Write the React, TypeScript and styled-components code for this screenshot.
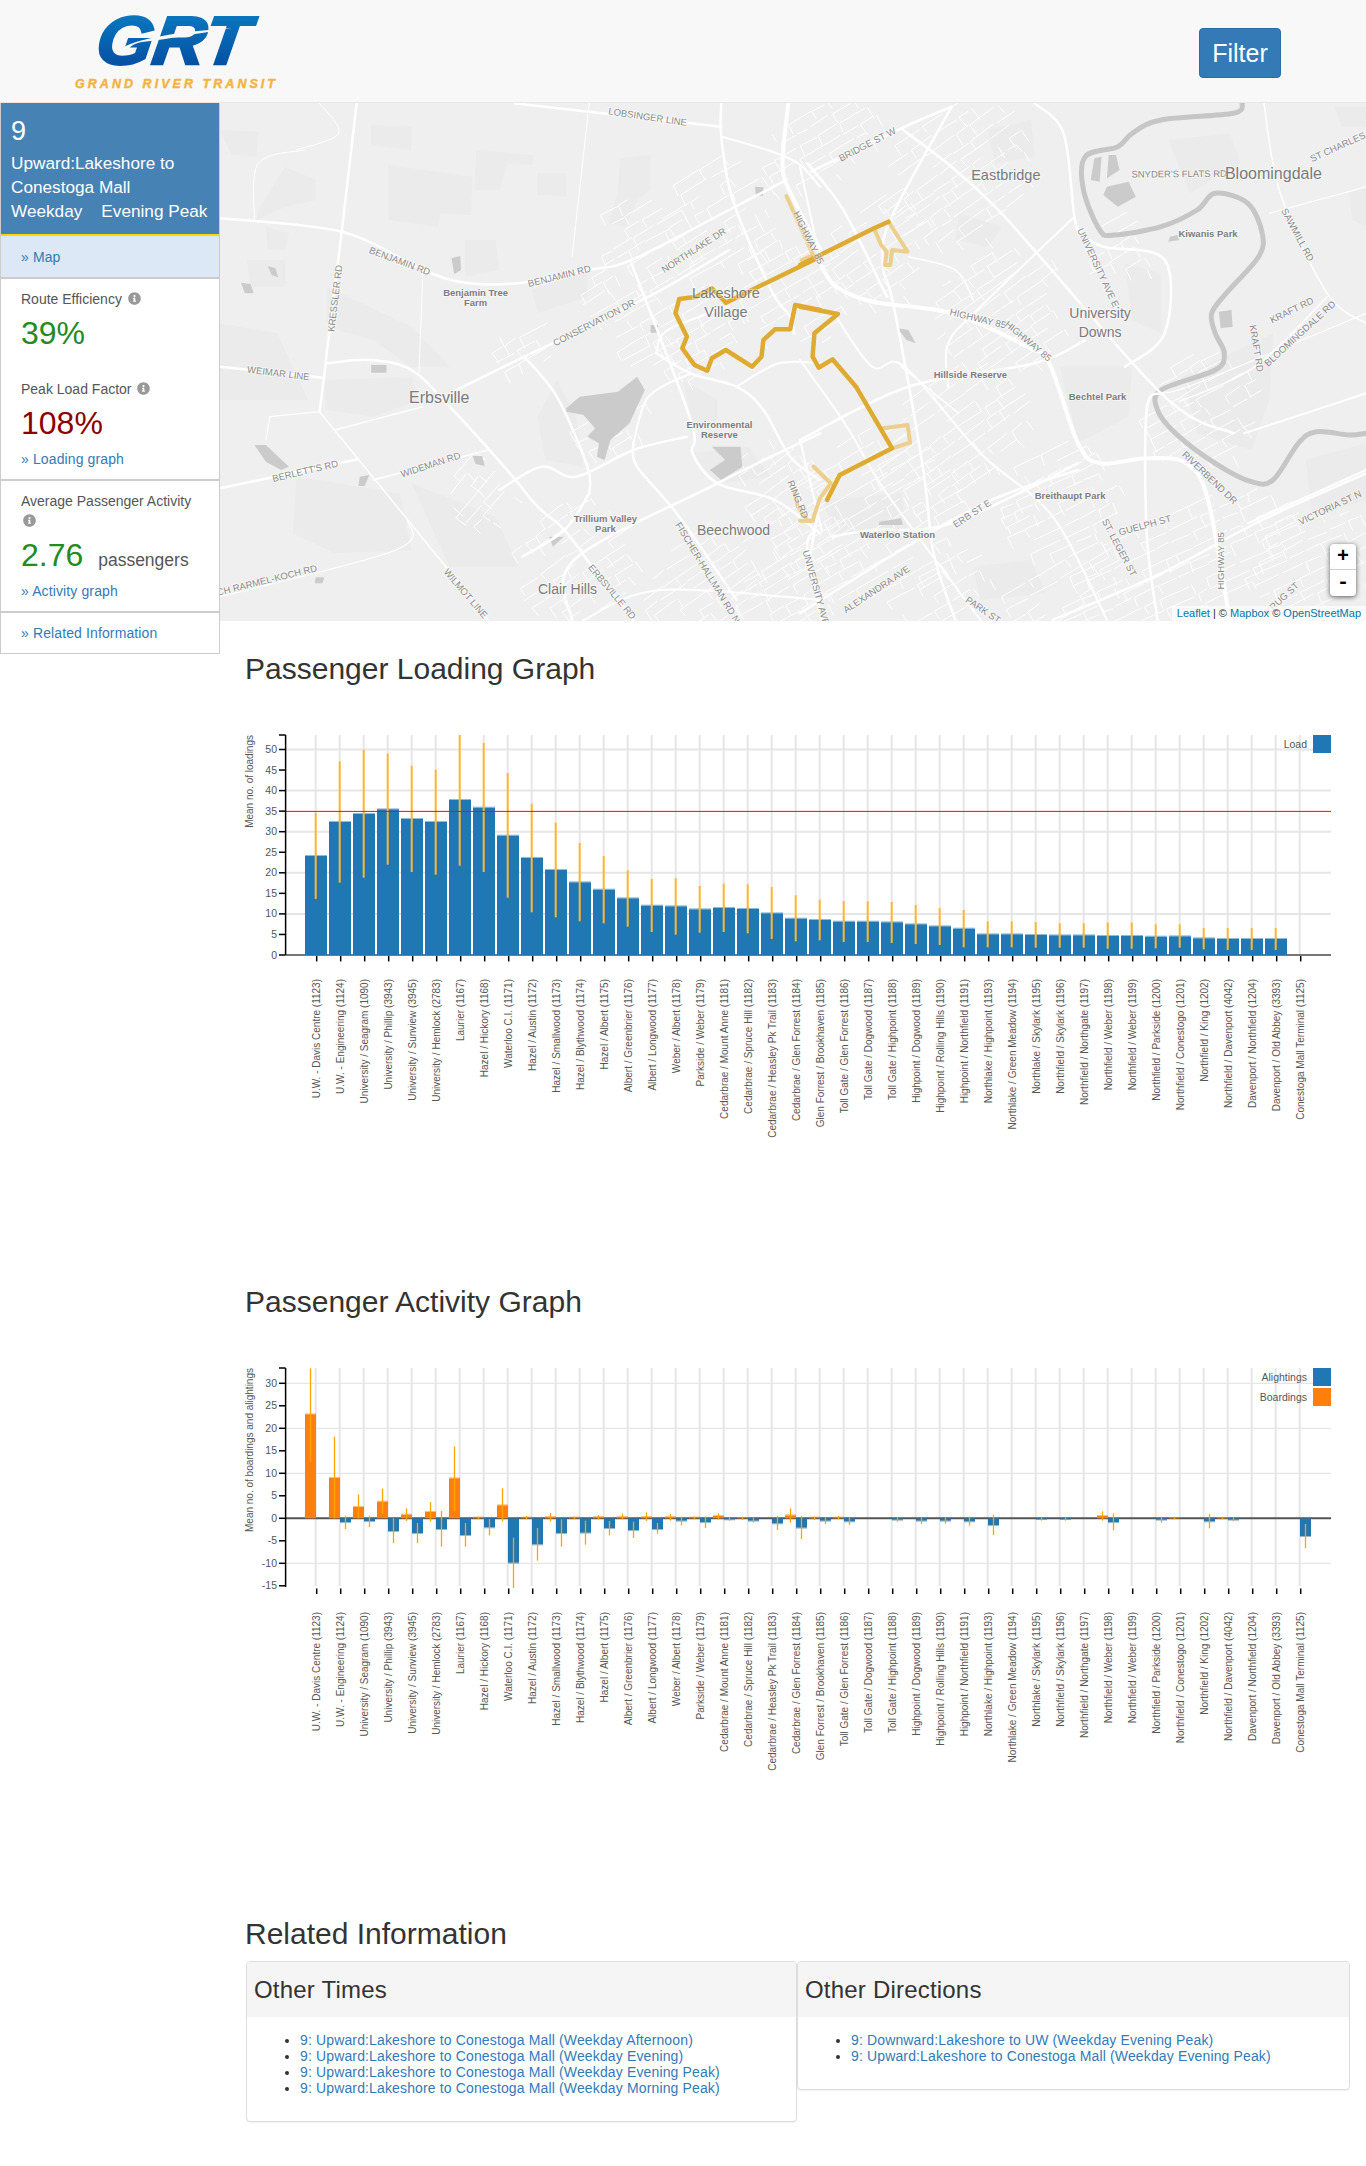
import React from "react";
import styled, { createGlobalStyle } from "styled-components";
import { FaInfoCircle } from "react-icons/fa";

const Global = createGlobalStyle`
  html, body { margin: 0; padding: 0; background: #fff; }
  body { font-family: "Liberation Sans", Arial, sans-serif; font-size: 14px; color: #333; }
  * { box-sizing: border-box; }
`;

/* ---------- layout ---------- */
const Navbar = styled.header`
  height: 103px; background: #f8f8f8; border-bottom: 1px solid #e7e7e7;
  display: flex; justify-content: space-between; align-items: flex-start; padding: 0 85px 0 75px;
`;
const LogoSvg = styled.svg`display: block;`;
const FilterButton = styled.button`
  margin-top: 28px; width: 82px; height: 50px; background: #337ab7; border: 1px solid #2e6da4; border-radius: 4px;
  color: #fff; font: 25px "Liberation Sans", Arial, sans-serif; padding: 0;
`;
const Layout = styled.div`display: flex; align-items: flex-start;`;
const Sidebar = styled.aside`
  width: 220px; flex: none; border: 1px solid #ccc; border-top: none; background: #fff;
`;
const RouteHeader = styled.div`
  background: #4682b4; color: #fff; border-bottom: 2px solid #ffd700; padding: 13px 10px 11px; font-size: 17.2px; line-height: 24px; height: 133px;
`;
const RouteNumber = styled.div`font-size: 27px; line-height: 30px; margin-bottom: 5px;`;
const PeakLine = styled.div`display: flex; gap: 19px;`;
const NavRow = styled.div`
  height: 43px; background: #dce8f5; border-bottom: 2px solid #ccc; padding: 0 20px; display: flex; align-items: center;
`;
const Block = styled.section`
  padding: 10px 20px; border-bottom: ${(p: { $last?: boolean }) => (p.$last ? "none" : "2px solid #ccc")};
`;
const MetricLabel = styled.div`
  color: #555; font-size: 14px; line-height: 20px;
  svg { vertical-align: -1px; margin-left: 2px; }
`;
const MetricValue = styled.div<{ $color: string; $after?: number }>`
  color: ${(p) => p.$color}; font-size: 32px; line-height: 36px; margin: 6px 0 ${(p) => p.$after ?? 0}px;
`;
const Unit = styled.span`color: #555; font-size: 17.5px; margin-left: 6px;`;
const SideLink = styled.a<{ $top?: number }>`
  display: block; color: #337ab7; font-size: 14px; line-height: 20px; letter-spacing: .12px; text-decoration: none; margin-top: ${(p) => p.$top ?? 0}px;
`;
const Main = styled.main`flex: 1; min-width: 0;`;
const MapWrap = styled.div`position: relative; height: 518px; overflow: hidden; background: #efefef;`;
const MapSvg = styled.svg`display: block;`;
const ZoomControl = styled.div`
  position: absolute; right: 10px; top: 441px; width: 26px; height: 52px; background: #fff; border-radius: 4px;
  box-shadow: 0 1px 5px rgba(0,0,0,.65);
`;
const ZoomBtn = styled.div<{ $top?: boolean }>`
  height: 26px; text-align: center; color: #000; font: bold 20px/25px "Liberation Mono", monospace;
  border-bottom: ${(p) => (p.$top ? "1px solid #ccc" : "none")};
`;
const Attribution = styled.div`
  position: absolute; right: 0; bottom: 0; padding: 0 5px; background: rgba(255,255,255,.7); font-size: 11px; line-height: 15px; color: #333;
`;
const AttrLink = styled.a`color: #0078a8; text-decoration: none;`;
const Section = styled.section<{ $after: number }>`padding-left: 25px; padding-bottom: ${(p) => p.$after}px;`;
const Title = styled.h2<{ $above: number; $below: number }>`
  font-size: 30px; font-weight: 400; line-height: 33px; margin: ${(p) => p.$above}px 0 ${(p) => p.$below}px; color: #333;
`;
const ChartSvg = styled.svg`display: block; margin-left: -25px;`;
const Panels = styled.div`display: grid; grid-template-columns: 551px 553px; align-items: start; margin-left: 1px;`;
const Panel = styled.div`border: 1px solid #ddd; border-radius: 4px; box-shadow: 0 1px 1px rgba(0,0,0,.05); background: #fff;`;
const PanelHead = styled.div`background: #f5f5f5; height: 55px; padding: 0 7px; display: flex; align-items: center; border-radius: 3px 3px 0 0;`;
const PanelTitle = styled.h3`font-size: 24px; font-weight: 400; margin: 0; color: #333; letter-spacing: .2px;`;
const PanelBody = styled.div`padding: 15px 13px;`;
const List = styled.ul`margin: 0 0 10px; padding-left: 40px; line-height: 16px;`;
const ListLink = styled.a`color: #337ab7; text-decoration: none; font-size: 14px; letter-spacing: .14px;`;

/* ---------- svg parts ---------- */
const Road = styled.path<{ $w: number; $c?: string }>`
  fill: none; stroke: ${(p) => p.$c ?? "#fff"}; stroke-width: ${(p) => p.$w}px; stroke-linejoin: round; stroke-linecap: round;
`;
const Land = styled.polygon<{ $c?: string }>`fill: ${(p) => p.$c ?? "#ebebeb"};`;
const Streets = styled.path`fill: none; stroke: #fff; stroke-width: 1px;`;
const MapLabel = styled.text<{ $size: number; $bold?: boolean; $c?: string }>`
  font-family: "Liberation Sans", Arial, sans-serif; font-size: ${(p) => p.$size}px; font-weight: ${(p) => (p.$bold ? 700 : 400)};
  fill: ${(p) => p.$c ?? "#8a8a8a"}; stroke: rgba(255,255,255,.45); stroke-width: 2px; paint-order: stroke; text-anchor: middle;
`;
const GridLine = styled.line<{ $w?: number }>`stroke: #e6e6e6; stroke-width: ${(p) => p.$w ?? 2}px;`;
const AxisLine = styled.line`stroke: #000; stroke-width: 1.5px;`;
const ZeroLine = styled.line<{ $c: string }>`stroke: ${(p) => p.$c}; stroke-width: 2px;`;
const LimitLine = styled.line`stroke: #e81010; stroke-width: 1px;`;
const Bar = styled.rect<{ $c: string }>`fill: ${(p) => p.$c};`;
const BarEdge = styled.rect<{ $c: string }>`fill: ${(p) => p.$c}; opacity: .5;`;
const ErrorBar = styled.line<{ $w: number; $c: string }>`stroke: ${(p) => p.$c}; stroke-width: ${(p) => p.$w}px;`;
const TickText = styled.text`font: 10.5px "Liberation Sans", Arial, sans-serif; fill: #555; text-anchor: end;`;
const AxisTitle = styled.text`font: 10px "Liberation Sans", Arial, sans-serif; fill: #555; text-anchor: end;`;
const StopText = styled.text`font: 10px "Liberation Sans", Arial, sans-serif; fill: #555; text-anchor: end;`;

/* ---------- map data (crop coordinates converted to page coordinates) ---------- */
type Side = "L" | "R";
const px = (s: Side, x: number) => (s === "L" ? 220 + x * 0.3827 : 800 + x * 0.3611);
const py = (y: number) => 100 + y / 3;
const parse = (s: Side, d: string) =>
  d.trim().split(/\s+/).map((p) => { const [x, y] = p.split(",").map(Number); return [px(s, x), py(y)] as [number, number]; });
const pts = (s: Side, d: string) => parse(s, d).map(([x, y]) => `${x.toFixed(1)},${y.toFixed(1)}`).join(" ");
const straight = (s: Side, d: string) => "M" + parse(s, d).map(([x, y]) => `${x.toFixed(1)} ${y.toFixed(1)}`).join("L");
const curved = (s: Side, d: string) => {
  const p = parse(s, d);
  let out = `M${p[0][0].toFixed(1)} ${p[0][1].toFixed(1)}`;
  for (let i = 0; i < p.length - 1; i++) {
    const a = p[Math.max(i - 1, 0)], b = p[i], c = p[i + 1], e = p[Math.min(i + 2, p.length - 1)];
    const c1 = [b[0] + (c[0] - a[0]) / 6, b[1] + (c[1] - a[1]) / 6];
    const c2 = [c[0] - (e[0] - b[0]) / 6, c[1] - (e[1] - b[1]) / 6];
    out += `C${c1[0].toFixed(1)} ${c1[1].toFixed(1)} ${c2[0].toFixed(1)} ${c2[1].toFixed(1)} ${c[0].toFixed(1)} ${c[1].toFixed(1)}`;
  }
  return out;
};

const landL = [
  "440,195 660,230 655,345 575,340 570,380 440,360", "670,150 820,165 815,195 750,190 730,270 665,270",
  "395,75 500,80 500,150 395,135", "1045,175 1125,165 1125,270 1090,300 1060,380 1015,370 1040,280",
  "830,220 905,220 905,290 830,285", "100,330 170,200 250,240 250,300 170,320 95,360", "640,420 720,420 730,510 640,530",
  "815,570 960,510 960,590 830,640", "280,560 500,680 600,800 500,800 400,720 280,680", "270,840 500,830 520,900 400,950 280,930",
  "200,1130 470,1180 500,1350 300,1360 190,1300", "500,1150 720,1250 780,1400 600,1400", "880,840 930,950 950,1100 850,1080 830,950",
  "0,90 100,95 95,170 30,165", "0,670 150,700 230,900 100,900 0,900", "1210,840 1300,900 1300,960 1235,980", "1230,1060 1380,1040 1440,1130 1300,1150",
  "120,380 180,400 170,450 125,450", "70,480 170,480 170,560 80,560",
];
const landR = [
  "1060,830 1310,700 1300,900 1250,1050 1100,1000", "720,800 920,800 910,950 770,1030", "900,490 1000,520 1000,700 920,660",
  "1020,120 1190,100 1220,190 1080,280", "1400,1080 1568,1030 1568,1200 1420,1250", "520,90 640,60 650,170 540,190",
  "60,1200 280,1180 300,1320 100,1300", "440,340 560,380 520,440 430,420", "480,1400 640,1380 680,1480 500,1500", "1480,20 1568,20 1568,80 1500,80",
  "1520,280 1568,260 1568,380 1530,360",
];
const waterL = [
  "905,925 940,890 1040,875 1090,830 1110,870 1070,970 1020,1020 1005,1080 985,1070 990,1030 960,1010 980,985 950,945 905,935",
  "90,1035 120,1035 180,1100 160,1110 120,1085", "395,795 435,795 435,818 395,818", "1285,1040 1360,1040 1365,1100 1310,1140 1280,1110 1320,1080",
  "55,548 80,552 88,580 65,580", "125,498 145,505 152,532 135,525", "605,475 628,468 630,510 612,522", "660,1068 685,1068 692,1098 668,1092",
  "365,1130 390,1125 378,1158 362,1158", "250,1432 272,1432 268,1450 248,1450", "1398,260 1420,262 1418,288 1400,285", "860,1310 898,1310 870,1340",
  "1125,675 1145,675 1145,698 1125,698",
];
const waterR = [
  "850,260 910,245 930,290 880,320 840,285", "815,175 835,170 830,245 805,240", "855,165 875,165 885,210 850,235", "1160,635 1195,630 1198,680 1165,685",
  "270,685 300,690 320,730 295,720", "1025,410 1045,405 1050,420 1020,425", "220,1265 280,1255 285,1275 218,1275",
];
const roadsL: [string, number][] = [
  ["357,10 318,395 285,700 272,830 260,935", 2.5],
  ["0,355 318,395 530,510 650,550 790,548 960,510 1075,480 1330,330 1480,240", 2.5],
  ["770,10 1000,40 1310,80", 2.5], ["0,800 270,833", 2.5],
  ["280,790 390,780 500,810 600,920 750,1110 830,1220 900,1290 985,1420 1080,1560", 2.5],
  ["600,880 795,770 1120,590 1330,450", 2.5], ["1075,490 1230,960 1235,1060 1300,1150 1450,1200 1568,1300", 2.5],
  ["1310,10 1310,110 1340,300 1440,570 1490,650 1500,700", 2.5], ["795,770 880,890 960,1100 965,1180", 2.5],
  ["0,1165 360,1078", 2.5], ["260,935 590,1400 700,1560", 1.5], ["400,1140 700,1050", 1.5], ["300,990 530,920", 1.5],
  ["1485,10 1470,200 1500,300 1568,450", 4], ["730,1170 840,1100 930,1130 1080,1050 1220,1010", 2.5],
  ["1140,760 1230,820 1350,860 1420,930 1490,1070 1568,1140", 2.5], ["920,1560 925,1380 1300,1150 1568,1000", 2.5],
  ["1080,1030 1090,1100 1200,1250 1350,1500", 2.5], ["1080,1030 1120,890 1230,820", 2], ["1140,760 1170,690 1330,620", 2],
  ["0,1490 460,1350 490,1260", 1.2], ["220,150 100,190 90,360", 1], ["260,10 310,100 200,150", 1], ["965,10 920,470", 1], ["530,520 520,820", 1],
  ["1310,110 1430,150 1510,190 1568,260", 2], ["790,1370 900,1290 965,1180", 2.5], ["950,1560 1150,1470 1568,1500", 2], ["1540,1380 1568,1200", 2.5],
  ["130,950 260,935", 1.2], ["130,950 120,1020", 1.2], ["1350,860 1460,790 1568,790", 2],
];
const roadsR: [string, number][] = [
  ["60,500 100,560 200,605 420,640 630,740 690,790 770,1030 830,1090 960,1075 1070,1090 1130,1200 1190,1560", 4],
  ["30,215 280,85 420,20", 2.5], ["280,85 540,320 1000,880 1200,1000", 2.5],
  ["650,10 730,100 760,350 780,400 840,440 1010,480 1010,700 900,800", 2.5], ["420,20 250,360 230,500 260,620 340,1100 370,1360 430,1560", 2.5],
  ["0,1020 300,860 650,790 790,720", 2.5], ["760,350 500,620 410,730 410,860", 2], ["1000,880 960,930 960,1300 990,1560", 2.5],
  ["1568,880 1230,1000", 2], ["90,1310 200,1290 420,1270 770,1090", 2.5], ["0,1540 280,1350 530,1200 770,1110", 2.5],
  ["700,1560 1000,1420 1280,1260 1568,1120", 2.5], ["1050,905 1260,800 1460,590", 1.5], ["1285,10 1330,280 1460,580 1568,670", 1.5],
  ["40,1290 20,1350 60,1560", 2.5], ["100,650 200,800 290,800 500,1060 700,1250 850,1560", 2], ["20,190 120,330 240,590", 2.5],
  ["0,200 60,500", 2], ["0,1020 60,1290", 2], ["0,780 130,980 240,1180 500,1560", 2], ["280,800 440,940", 1.5], ["300,470 430,510 480,600", 1.5],
  ["1240,1270 1568,1110", 2], ["1000,880 1100,850 1568,640", 1.2], ["1568,260 1300,340", 1.2],
];
const riverR = "1225,10 1200,40 1000,60 920,100 880,140 790,170 785,270 830,390 870,405 1000,380 1100,330 1150,280 1240,310 1280,400 1270,470 1180,580 1140,640 1150,700 1175,760 1150,810 1000,870 990,930 1040,1000 1150,1090 1250,1145 1310,1140 1380,1030 1430,995 1520,1005 1568,1000";
const routeMain: [Side, string][] = [
  ["L", "1322,608 1285,565 1245,590 1200,597 1190,640 1220,710 1208,745 1240,795 1273,812 1285,775 1322,750 1390,800 1415,770 1420,720 1450,688 1490,688 1503,615 1568,630"],
  ["L", "1322,608 1568,470"],
  ["R", "0,495 205,385 245,365"],
  ["R", "0,620 105,642 40,700 35,770 52,803 90,778 155,860 255,1045 110,1125 75,1200"],
];
const routeSoft: [Side, string][] = [
  ["L", "1480,288 1550,465 1520,480"], ["R", "38,1100 85,1150"], ["R", "85,1150 55,1195 35,1262 0,1262"], ["L", "1500,1170 1510,1220 1535,1262 1550,1262"],
  ["R", "230,985 298,975 305,1028 255,1045"], ["R", "205,385 225,435 240,455 235,495 250,495 255,450 298,455 245,365"],
];

type Lab = [Side, string, number, number, number, number];
const roadLabels: Lab[] = [
  ["L", "LOBSINGER LINE", 1000, 30, 1235, 70], ["L", "BENJAMIN RD", 395, 450, 545, 515], ["L", "BENJAMIN RD", 808, 550, 965, 505],
  ["L", "KRESSLER RD", 290, 690, 310, 500], ["L", "NORTHLAKE DR", 1157, 510, 1318, 390], ["L", "CONSERVATION DR", 872, 730, 1082, 605],
  ["L", "WEIMAR LINE", 75, 808, 230, 830], ["L", "BERLETT'S RD", 140, 1135, 305, 1090], ["L", "WIDEMAN RD", 475, 1122, 625, 1065],
  ["L", "FISCHER-HALLMAN RD N", 1200, 1275, 1350, 1560], ["L", "RING RD", 1492, 1145, 1530, 1250], ["L", "ERBSVILLE RD", 970, 1400, 1080, 1550],
  ["L", "WILMOT LINE", 590, 1410, 695, 1550], ["L", "CH RARMEL-KOCH RD", 0, 1475, 245, 1405], ["L", "HIGHWAY 85", 1505, 335, 1572, 490],
  ["R", "BRIDGE ST W", 110, 175, 262, 90], ["R", "SNYDER'S FLATS RD", 925, 222, 1175, 220], ["R", "ST CHARLES", 1418, 175, 1560, 105],
  ["R", "SAWMILL RD", 1342, 330, 1415, 478], ["R", "UNIVERSITY AVE E", 778, 390, 875, 615], ["R", "HIGHWAY 85", 418, 635, 568, 675],
  ["R", "HIGHWAY 85", 580, 675, 685, 770], ["R", "KRAFT RD", 1305, 660, 1418, 600], ["R", "KRAFT RD", 1255, 680, 1275, 810],
  ["R", "BLOOMINGDALE RD", 1298, 785, 1470, 615], ["R", "RIVERBEND DR", 1065, 1060, 1205, 1205], ["R", "ERB ST E", 427, 1275, 525, 1205],
  ["R", "VICTORIA ST N", 1385, 1265, 1550, 1180], ["R", "ST. LEGER ST", 845, 1260, 925, 1425], ["R", "GUELPH ST", 888, 1295, 1022, 1255],
  ["R", "HIGHWAY 85", 1165, 1465, 1165, 1300], ["R", "ALEXANDRA AVE", 125, 1530, 298, 1405], ["R", "UNIVERSITY AVE", 20, 1365, 70, 1560],
  ["R", "PARK ST", 465, 1498, 550, 1560], ["R", "KRUG ST", 1290, 1540, 1378, 1450],
];
const placeLabels: [Side, string, number, number, number, boolean][] = [
  ["L", "Benjamin Tree", 668, 577, 9.5, true], ["L", "Farm", 668, 607, 9.5, true], ["L", "Erbsville", 573, 893, 16, false],
  ["L", "Lakeshore", 1322, 578, 14.5, false], ["L", "Village", 1322, 635, 14.5, false], ["L", "Environmental", 1305, 974, 9.5, true], ["L", "Reserve", 1305, 1004, 9.5, true],
  ["L", "Trillium Valley", 1007, 1257, 9.5, true], ["L", "Park", 1007, 1287, 9.5, true], ["L", "Beechwood", 1342, 1290, 14, false], ["L", "Clair Hills", 908, 1467, 14, false],
  ["R", "Eastbridge", 570, 225, 14.5, false], ["R", "Bloomingdale", 1311, 220, 16, false], ["R", "Kiwanis Park", 1130, 402, 9.5, true],
  ["R", "University", 831, 638, 14, false], ["R", "Downs", 831, 695, 14, false], ["R", "Hillside Reserve", 472, 825, 9.5, true], ["R", "Bechtel Park", 824, 890, 9.5, true],
  ["R", "Breithaupt Park", 748, 1188, 9.5, true], ["R", "Waterloo Station", 270, 1304, 9.5, true],
];

const fabricPatches: [number, number, number, number, number][] = [
  [680, 320, 150, 120, -30], [640, 235, 100, 90, -30], [720, 215, 120, 120, -30], [820, 140, 130, 80, -30], [790, 290, 110, 140, -30], [880, 250, 120, 110, -35],
  [870, 520, 210, 180, -30], [790, 500, 100, 140, -35], [960, 175, 180, 140, -35], [1000, 310, 150, 130, -35], [950, 430, 180, 120, -35], [1060, 500, 130, 120, -25],
  [1180, 560, 270, 110, -25], [1200, 410, 130, 120, -30], [1310, 560, 140, 110, -25], [1120, 250, 80, 80, -30], [575, 560, 140, 120, -35], [705, 575, 140, 100, -35],
  [785, 590, 120, 80, -30], [480, 490, 80, 80, -50], [610, 420, 100, 60, -30], [525, 345, 70, 60, -30], [610, 300, 60, 80, -30], [1060, 590, 160, 70, -30], [950, 590, 120, 70, -30],
];
function buildFabric() {
  let seed = 91;
  const rnd = () => { seed = (seed * 16807) % 2147483647; return seed / 2147483647; };
  let d = "";
  for (const [cx, cy, w, h, deg] of fabricPatches) {
    const a = (deg * Math.PI) / 180;
    const P = (u: number, v: number) => `${(cx + u * Math.cos(a) - v * Math.sin(a)).toFixed(1)} ${(cy + u * Math.sin(a) + v * Math.cos(a)).toFixed(1)}`;
    const inside = (u: number, v: number) => (u * u) / ((w / 2) * (w / 2)) + (v * v) / ((h / 2) * (h / 2)) < 1;
    for (let v = -h / 2; v < h / 2; v += 8 + rnd() * 6) {
      let u = -w / 2 + rnd() * 10;
      while (u < w / 2) {
        const len = 10 + rnd() * 24;
        if (inside(u, v) && inside(u + len, v) && rnd() > 0.12) d += `M${P(u, v)}L${P(u + len, v + (rnd() - 0.5) * 3)}`;
        if (inside(u, v) && rnd() > 0.4) d += `M${P(u, v)}L${P(u + (rnd() - 0.5) * 3, v + 8 + rnd() * 6)}`;
        u += len + rnd() * 5;
      }
    }
  }
  return d;
}
const fabric = buildFabric();

function MapDrawing() {
  return (
    <MapSvg width={1146} height={518} viewBox="220 103 1146 518">
      {landL.map((d, i) => <Land key={i} points={pts("L", d)} />)}
      {landR.map((d, i) => <Land key={i} points={pts("R", d)} />)}
      <Streets d={fabric} />
      {waterL.map((d, i) => <Land key={i} $c="#cbcbcb" points={pts("L", d)} />)}
      {waterR.map((d, i) => <Land key={i} $c="#cbcbcb" points={pts("R", d)} />)}
      <Road $w={5} $c="#c6c6c6" d={curved("R", riverR)} />
      {roadsL.map(([d, w], i) => <Road key={i} $w={w} d={curved("L", d)} />)}
      {roadsR.map(([d, w], i) => <Road key={i} $w={w} d={curved("R", d)} />)}
      {routeSoft.map(([s, d], i) => <Road key={i} $w={4} $c="#eccf8c" d={straight(s, d)} />)}
      {routeMain.map(([s, d], i) => <Road key={i} $w={4.5} $c="#dfaa30" d={straight(s, d)} />)}
      {roadLabels.map(([s, t, x1, y1, x2, y2], i) => {
        let ax = px(s, x1), ay0 = py(y1), bx = px(s, x2), by = py(y2);
        if (ax > bx) { [ax, bx] = [bx, ax]; [ay0, by] = [by, ay0]; }
        const angle = (Math.atan2(by - ay0, bx - ax) * 180) / Math.PI;
        const mx = (ax + bx) / 2, my = (ay0 + by) / 2;
        return <MapLabel key={i} $size={9.5} transform={`translate(${mx} ${my}) rotate(${angle}) translate(0 3.5)`}>{t}</MapLabel>;
      })}
      {placeLabels.map(([s, t, x, y, size, bold], i) => (
        <MapLabel key={i} $size={size} $bold={bold} $c={bold ? "#7d7d7d" : "#7a7a7a"} x={px(s, x)} y={py(y) + size * 0.36}>{t}</MapLabel>
      ))}
    </MapSvg>
  );
}

/* ---------- chart data ---------- */
const stops = [
  "U.W. - Davis Centre (1123)", "U.W. - Engineering (1124)", "University / Seagram (1090)", "University / Phillip (3943)", "University / Sunview (3945)",
  "University / Hemlock (2783)", "Laurier (1167)", "Hazel / Hickory (1168)", "Waterloo C.I. (1171)", "Hazel / Austin (1172)", "Hazel / Smallwood (1173)",
  "Hazel / Blythwood (1174)", "Hazel / Albert (1175)", "Albert / Greenbrier (1176)", "Albert / Longwood (1177)", "Weber / Albert (1178)", "Parkside / Weber (1179)",
  "Cedarbrae / Mount Anne (1181)", "Cedarbrae / Spruce Hill (1182)", "Cedarbrae / Heasley Pk Trail (1183)", "Cedarbrae / Glen Forrest (1184)", "Glen Forrest / Brookhaven (1185)",
  "Toll Gate / Glen Forrest (1186)", "Toll Gate / Dogwood (1187)", "Toll Gate / Highpoint (1188)", "Highpoint / Dogwood (1189)", "Highpoint / Rolling Hills (1190)",
  "Highpoint / Northfield (1191)", "Northlake / Highpoint (1193)", "Northlake / Green Meadow (1194)", "Northlake / Skylark (1195)", "Northfield / Skylark (1196)",
  "Northfield / Northgate (1197)", "Northfield / Weber (1198)", "Northfield / Weber (1199)", "Northfield / Parkside (1200)", "Northfield / Conestogo (1201)",
  "Northfield / King (1202)", "Northfield / Davenport (4042)", "Davenport / Northfield (1204)", "Davenport / Old Abbey (3393)", "Conestoga Mall Terminal (1125)",
];
const cx = (i: number) => 316.3 + i * 24;
const AXIS_X = 285.6, RIGHT = 1331;
const loads: [number, number, number][] = [
  [408, 278, 537], [306, 124, 488], [282, 89, 473], [268, 101, 434], [297, 137, 456], [306, 149, 464], [240, 45, 437], [263, 69, 456], [347, 159, 533], [414, 251, 577],
  [450, 308, 592], [487, 369, 604], [509, 408, 610], [535, 451, 620], [557, 477, 636], [559, 475, 644], [568, 498, 638], [564, 491, 636], [567, 493, 640], [580, 501, 657],
  [596, 526, 664], [600, 539, 661], [605, 543, 666], [605, 544, 666], [607, 546, 669], [613, 555, 672], [619, 564, 675], [626, 570, 682], [643, 604, 682], [643, 604, 682],
  [645, 606, 683], [646, 610, 683], [646, 610, 683], [648, 607, 686], [648, 607, 686], [650, 613, 685], [649, 613, 683], [655, 624, 688], [657, 624, 690], [657, 624, 690], [657, 624, 690],
];
const ly = (z: number) => 720 + z / 3;
type Tri = [number, number, number] | null;
const activity: Record<number, [Tri, Tri]> = {
  0: [[193, 55, 335], null], 1: [[384, 260, 505], [516, 497, 537]], 2: [[471, 433, 505], [513, 497, 531]], 3: [[455, 416, 492], [543, 505, 579]],
  4: [[494, 475, 513], [549, 519, 579]], 5: [[486, 456, 515], [537, 483, 590]], 6: [[385, 289, 483], [555, 519, 590]], 7: [[503, 500, 508], [532, 507, 556]],
  8: [[466, 415, 515], [638, 563, 714]], 9: [[503, 498, 508], [583, 534, 632]], 10: [[501, 489, 515], [549, 508, 590]], 11: [[503, 500, 508], [548, 512, 584]],
  12: [[501, 495, 508], [534, 513, 556]], 13: [[501, 491, 508], [540, 515, 564]], 14: [[501, 487, 513], [537, 519, 551]], 15: [[501, 492, 512], [512, 500, 526]],
  16: [[503, 500, 508], [516, 499, 534]], 17: [[498, 490, 508], [508, 502, 512]], 18: [[504, 500, 510], [512, 503, 518]], 19: [null, [520, 498, 540]],
  20: [[496, 475, 518], [533, 498, 567]], 21: [[503, 500, 510], [512, 502, 522]], 22: [[503, 498, 508], [514, 502, 525]], 24: [null, [509, 502, 515]],
  25: [null, [512, 502, 522]], 26: [null, [512, 502, 521]], 27: [null, [514, 500, 527]], 28: [null, [525, 494, 555]], 30: [null, [507, 502, 512]], 31: [null, [507, 502, 512]],
  33: [[498, 484, 512], [516, 490, 541]], 35: [null, [509, 500, 518]], 36: [[504, 500, 508], null], 37: [null, [514, 492, 535]], 38: [[504, 500, 508], [509, 502, 514]],
  41: [null, [558, 522, 595]],
};
const ay = (z: number) => 1350 + z / 3;

const range = (from: number, to: number, step: number) => { const r: number[] = []; for (let v = from; v <= to; v += step) r.push(v); return r; };

function YAxis({ zero, unit, from, to, top, bottom }: { zero: number; unit: number; from: number; to: number; top: number; bottom: number }) {
  return (
    <>
      <AxisLine x1={AXIS_X} x2={AXIS_X} y1={top} y2={bottom} />
      <AxisLine x1={279} x2={AXIS_X} y1={top} y2={top} />
      {range(from, to, 5).map((v) => (
        <g key={v}>
          <AxisLine x1={279} x2={AXIS_X} y1={zero - v * unit} y2={zero - v * unit} />
          <TickText x={277} y={zero - v * unit + 3.5}>{v}</TickText>
        </g>
      ))}
    </>
  );
}
function XAxis({ tickTop, textTop }: { tickTop: number; textTop: number }) {
  return (
    <>
      {stops.map((s, i) => (
        <g key={s + i}>
          <AxisLine x1={cx(i) + 0.4} x2={cx(i) + 0.4} y1={tickTop} y2={tickTop + 5.5} />
          <StopText transform={`translate(${cx(i) + 4} ${textTop}) rotate(-90)`}>{s}</StopText>
        </g>
      ))}
    </>
  );
}

function LoadingChart() {
  const zero = 955, unit = 4.11;
  return (
    <ChartSvg width={1146} height={420} viewBox="220 720 1146 420">
      {[50, 40, 30, 20, 10].map((v) => <GridLine key={v} x1={AXIS_X} x2={RIGHT} y1={zero - v * unit} y2={zero - v * unit} />)}
      {stops.map((s, i) => <GridLine key={s + i} x1={cx(i) - 0.6} x2={cx(i) - 0.6} y1={735} y2={954} />)}
      <ZeroLine $c="#777" x1={AXIS_X} x2={RIGHT} y1={zero} y2={zero} />
      {loads.map(([top], i) => (
        <g key={i}>
          <Bar $c="#1f77b4" x={cx(i) - 11.3} width={22} y={ly(top)} height={zero - ly(top)} />
          <BarEdge $c="#1f77b4" x={cx(i) - 11.3} width={22} y={ly(top) - 1} height={1} />
        </g>
      ))}
      {loads.map(([, a, b], i) => <ErrorBar key={i} $w={2} $c="#ffb733" x1={cx(i) - 0.6} x2={cx(i) - 0.6} y1={ly(a)} y2={ly(b)} />)}
      <LimitLine x1={AXIS_X} x2={RIGHT} y1={811.4} y2={811.4} />
      <YAxis zero={zero} unit={unit} from={0} to={50} top={735} bottom={zero} />
      <AxisTitle transform="translate(253 735) rotate(-90)">Mean no. of loadings</AxisTitle>
      <XAxis tickTop={956} textTop={979} />
      <TickText x={1307} y={748}>Load</TickText>
      <Bar $c="#1f77b4" x={1313} y={735} width={18} height={18} />
    </ChartSvg>
  );
}

function ActivityChart() {
  const zero = 1518.3, unit = 4.5;
  return (
    <ChartSvg width={1146} height={420} viewBox="220 1353 1146 420">
      {[30, 20, 10, -10].map((v) => <GridLine key={v} $w={1.2} x1={AXIS_X} x2={RIGHT} y1={zero - v * unit} y2={zero - v * unit} />)}
      {stops.map((s, i) => <GridLine key={s + i} x1={cx(i) - 0.6} x2={cx(i) - 0.6} y1={1368} y2={1586} />)}
      <ZeroLine $c="#555" x1={AXIS_X} x2={RIGHT} y1={zero} y2={zero} />
      {Object.entries(activity).map(([k, [b, a]]) => {
        const i = Number(k), c = cx(i) - 0.3;
        return (
          <g key={k}>
            {b && <Bar $c="#ff7f0e" x={c - 11} width={11} y={ay(b[0])} height={zero - ay(b[0])} />}
            {b && <BarEdge $c="#ff7f0e" x={c - 11} width={11} y={ay(b[0]) - 1} height={1} />}
            {a && <Bar $c="#1f77b4" x={c} width={11} y={zero} height={ay(a[0]) - zero} />}
            {a && <BarEdge $c="#1f77b4" x={c} width={11} y={ay(a[0])} height={1} />}
            {b && <ErrorBar $w={1.3} $c="#ffa500" x1={c - 5.5} x2={c - 5.5} y1={ay(b[1])} y2={ay(b[2])} />}
            {a && <ErrorBar $w={1.3} $c="#ffa500" x1={c + 5.5} x2={c + 5.5} y1={ay(a[1])} y2={ay(a[2])} />}
          </g>
        );
      })}
      <YAxis zero={zero} unit={unit} from={-15} to={30} top={1368} bottom={1587} />
      <AxisTitle transform="translate(253 1368) rotate(-90)">Mean no. of boardings and alightings</AxisTitle>
      <XAxis tickTop={1588.5} textTop={1612} />
      <TickText x={1307} y={1381}>Alightings</TickText>
      <Bar $c="#1f77b4" x={1313} y={1368} width={18} height={18} />
      <TickText x={1307} y={1401}>Boardings</TickText>
      <Bar $c="#ff7f0e" x={1313} y={1388} width={18} height={18} />
    </ChartSvg>
  );
}

function Logo() {
  return (
    <LogoSvg width={205} height={100} viewBox="75 0 205 100">
      <defs>
        <linearGradient id="grt" x1="0" y1="0" x2="0" y2="1">
          <stop offset="0" stopColor="#0a80c6" />
          <stop offset="1" stopColor="#04479b" />
        </linearGradient>
      </defs>
      <text x={103} y={64} transform="skewX(-8)" fontFamily="Liberation Sans" fontWeight={700} fontStyle="italic" fontSize={68} textLength={152} lengthAdjust="spacingAndGlyphs" fill="url(#grt)" stroke="url(#grt)" strokeWidth={2.5}>GRT</text>
      <path d="M117 51 C132 40 165 33 232 28 C200 33 170 39 142 42 C132 44 129 47 128 52 Z" fill="#f8f8f8" />
      <text x={75} y={88} fontFamily="Liberation Sans" fontWeight={700} fontStyle="italic" fontSize={12.5} textLength={200} fill="#f4b23e" stroke="#f4b23e" strokeWidth={0.4}>GRAND RIVER TRANSIT</text>
    </LogoSvg>
  );
}

const InfoIcon = () => <FaInfoCircle size={13} color="#999" />;

const otherTimes = ["Weekday Afternoon", "Weekday Evening", "Weekday Evening Peak", "Weekday Morning Peak"];

export default function App() {
  return (
    <>
      <Global />
      <Navbar>
        <Logo />
        <FilterButton>Filter</FilterButton>
      </Navbar>
      <Layout>
        <Sidebar>
          <RouteHeader>
            <RouteNumber>9</RouteNumber>
            <div>Upward:Lakeshore to Conestoga Mall</div>
            <PeakLine><span>Weekday</span><span>Evening Peak</span></PeakLine>
          </RouteHeader>
          <NavRow><SideLink href="#map">» Map</SideLink></NavRow>
          <Block>
            <MetricLabel>Route Efficiency <InfoIcon /></MetricLabel>
            <MetricValue $color="#228b22" $after={28}>39%</MetricValue>
            <MetricLabel>Peak Load Factor <InfoIcon /></MetricLabel>
            <MetricValue $color="#8b0000">108%</MetricValue>
            <SideLink $top={8} href="#loading">» Loading graph</SideLink>
          </Block>
          <Block>
            <MetricLabel>Average Passenger Activity <InfoIcon /></MetricLabel>
            <MetricValue $color="#228b22">2.76 <Unit>passengers</Unit></MetricValue>
            <SideLink $top={2.5} href="#activity">» Activity graph</SideLink>
          </Block>
          <Block $last>
            <SideLink href="#related">» Related Information</SideLink>
          </Block>
        </Sidebar>
        <Main>
          <MapWrap>
            <MapDrawing />
            <ZoomControl>
              <ZoomBtn $top>+</ZoomBtn>
              <ZoomBtn>-</ZoomBtn>
            </ZoomControl>
            <Attribution>
              <AttrLink href="#leaflet">Leaflet</AttrLink> | © <AttrLink href="#mapbox">Mapbox</AttrLink> © <AttrLink href="#osm">OpenStreetMap</AttrLink>
            </Attribution>
          </MapWrap>
          <Section $after={114}>
            <Title $above={31} $below={35}>Passenger Loading Graph</Title>
            <LoadingChart />
          </Section>
          <Section $after={113}>
            <Title $above={31} $below={35}>Passenger Activity Graph</Title>
            <ActivityChart />
          </Section>
          <Section $after={45}>
            <Title $above={31} $below={11}>Related Information</Title>
            <Panels>
              <Panel>
                <PanelHead><PanelTitle>Other Times</PanelTitle></PanelHead>
                <PanelBody>
                  <List>
                    {otherTimes.map((t) => <li key={t}><ListLink href="#t">9: Upward:Lakeshore to Conestoga Mall ({t})</ListLink></li>)}
                  </List>
                </PanelBody>
              </Panel>
              <Panel>
                <PanelHead><PanelTitle>Other Directions</PanelTitle></PanelHead>
                <PanelBody>
                  <List>
                    <li><ListLink href="#d">9: Downward:Lakeshore to UW (Weekday Evening Peak)</ListLink></li>
                    <li><ListLink href="#u">9: Upward:Lakeshore to Conestoga Mall (Weekday Evening Peak)</ListLink></li>
                  </List>
                </PanelBody>
              </Panel>
            </Panels>
          </Section>
        </Main>
      </Layout>
    </>
  );
}
